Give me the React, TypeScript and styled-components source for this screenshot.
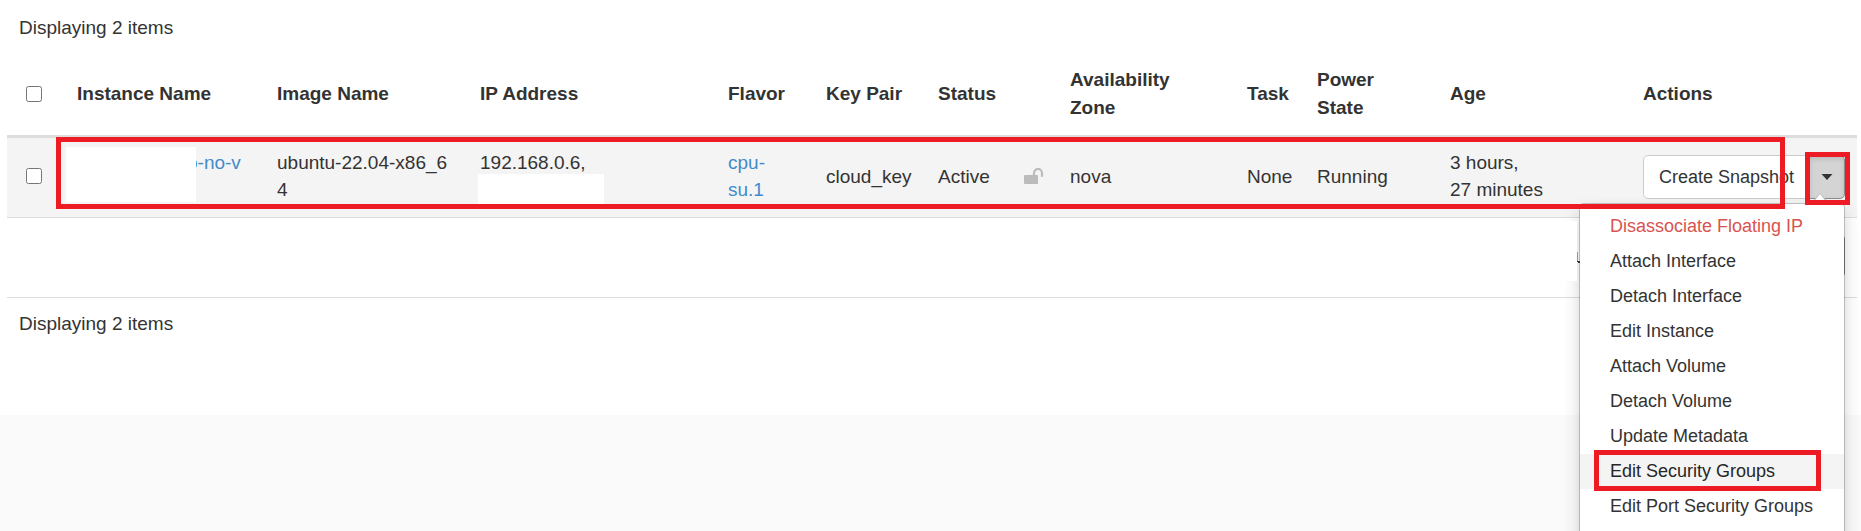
import React from "react";
import styled, { createGlobalStyle, css } from "styled-components";

const GlobalStyle = createGlobalStyle`
  *, *::before, *::after { box-sizing: border-box; }
  body {
    margin: 0;
    background: #fafafa;
    color: #333;
    font: 19px/27px "Liberation Sans", Arial, sans-serif;
  }
`;

const Page = styled.main`
  height: 100vh;
  overflow: hidden;
`;

const Panel = styled.section`
  padding: 0 4px 78px 7px;
  background: #fff;
`;

const Count = styled.p<{ $compact?: boolean }>`
  margin: 0;
  padding: ${(p) => (p.$compact ? "12px 12px 0" : "14px 12px 13px")};
`;

const Table = styled.table`
  width: 100%;
  table-layout: fixed;
  border-collapse: separate;
  border-spacing: 0;
`;

const Col = styled.col<{ $share: number }>`
  width: ${(p) => (p.$share / 1850) * 100}%;
`;

const Th = styled.th`
  height: 84px;
  padding: 0 11px 2px;
  border-bottom: 3px solid #ddd;
  line-height: 28px;
  text-align: left;
  vertical-align: middle;
`;

const Row = styled.tr<{ $striped?: boolean }>`
  position: relative;
  background: ${(p) => (p.$striped ? "#f4f4f4" : "#fff")};
`;

const Td = styled.td`
  position: relative;
  height: 80px;
  padding: 0 11px 3px;
  border-bottom: 1px solid #ddd;
  vertical-align: middle;
`;

const PlainTd = styled(Td)`
  position: static;
`;

const ImageTd = styled(Td)`
  padding-right: 20px;
  word-break: break-all;
`;

const ActionsTd = styled(Td)`
  padding-bottom: 1px;
`;

const Check = styled.input`
  display: block;
  width: 16px;
  height: 16px;
  margin: 0 0 0 8px;
`;

const Link = styled.a`
  color: #428bca;
  text-decoration: none;
`;

const TwoLines = styled.div`
  height: 54px;
`;

const NameLines = styled(TwoLines)`
  padding-left: 110px;
`;

const Redaction = styled.span<{ $kind: "name" | "address" | "row" }>`
  position: absolute;
  background: #fff;
  ${(p) =>
    p.$kind === "name" &&
    css`
      left: 0;
      top: 9px;
      width: 130px;
      height: 55px;
    `}
  ${(p) =>
    p.$kind === "address" &&
    css`
      left: 9px;
      top: 36px;
      width: 126px;
      height: 30px;
    `}
  ${(p) =>
    p.$kind === "row" &&
    css`
      right: 280px;
      top: 3px;
      width: 60px;
      height: 60px;
      z-index: 3;
    `}
`;

const Fragment = styled.svg`
  position: absolute;
  right: 277px;
  top: 34px;
  z-index: 3;
`;

const ButtonGroup = styled.div`
  position: relative;
  display: flex;
  width: 202px;
`;

const Button = styled.button`
  flex: 1;
  height: 44px;
  padding: 0 15px;
  border: 1px solid #ccc;
  border-radius: 5px 0 0 5px;
  background: #fff;
  color: #333;
  font: 18px/26px "Liberation Sans", Arial, sans-serif;
  white-space: nowrap;
`;

const Toggle = styled.button`
  display: flex;
  align-items: center;
  justify-content: center;
  width: 38px;
  height: 44px;
  margin-left: -1px;
  padding: 0;
  border: 1px solid #8c8c8c;
  border-radius: 0 5px 5px 0;
  background: #d4d4d4;
  box-shadow: inset 0 3px 5px rgba(0, 0, 0, 0.125);
`;

const LoneToggle = styled(Toggle)`
  margin-left: 164px;
`;

const Menu = styled.ul`
  position: absolute;
  z-index: 2;
  top: 48px;
  right: 0;
  width: 266px;
  margin: 0;
  padding: 5px 0 24px;
  list-style: none;
  background: #fff;
  background-clip: padding-box;
  border: 1px solid rgba(0, 0, 0, 0.2);
  border-radius: 5px;
  box-shadow: 0 8px 16px rgba(0, 0, 0, 0.175);

  &::before {
    content: "";
    position: absolute;
    top: -11px;
    right: 15px;
    border: 9px solid transparent;
    border-top: 0;
    border-bottom: 10px solid #bbb;
  }

  &::after {
    content: "";
    position: absolute;
    top: -10px;
    right: 16px;
    border: 8px solid transparent;
    border-top: 0;
    border-bottom: 10px solid #fff;
  }
`;

const MenuLink = styled.a<{ $danger?: boolean; $active?: boolean }>`
  display: block;
  padding: 0 30px;
  background: ${(p) => (p.$active ? "#f4f4f4" : "transparent")};
  color: ${(p) => (p.$danger ? "#d9534f" : p.$active ? "#262626" : "#333")};
  font-size: 18px;
  line-height: 35px;
  text-decoration: none;
  white-space: nowrap;
`;

const MenuItem = styled.li`
  position: relative;
`;

const Highlight = styled.span<{ $target: "row" | "toggle" | "item" }>`
  position: absolute;
  z-index: 4;
  border: 5px solid #ed1c24;
  pointer-events: none;
  ${(p) =>
    p.$target === "row" &&
    css`
      top: -1px;
      left: 49px;
      right: 72px;
      height: 72px;
    `}
  ${(p) =>
    p.$target === "toggle" &&
    css`
      top: -3px;
      right: -5px;
      width: 45px;
      height: 53px;
    `}
  ${(p) =>
    p.$target === "item" &&
    css`
      top: -4px;
      left: 14px;
      right: 23px;
      height: 41px;
    `}
`;

const shares = [59, 200, 203, 248, 98, 112, 86, 46, 177, 70, 133, 193, 225];

const menuItems = [
  "Disassociate Floating IP",
  "Attach Interface",
  "Detach Interface",
  "Edit Instance",
  "Attach Volume",
  "Detach Volume",
  "Update Metadata",
  "Edit Security Groups",
  "Edit Port Security Groups",
];

const LockSvg = styled.svg`
  display: block;
`;

const UnlockIcon = () => (
  <LockSvg width="20" height="17" viewBox="0 0 20 17" role="img" aria-label="Unlocked">
    <rect x="0" y="7" width="14" height="9" rx="1" fill="#bbb" />
    <path d="M10 7.500V5a4 4 0 0 1 8 0v3" fill="none" stroke="#bbb" strokeWidth="2.200" strokeLinecap="round" />
  </LockSvg>
);

const Caret = () => (
  <svg width="12" height="6" viewBox="0 0 12 6" aria-hidden="true">
    <path d="M0.500 0h11L6 6z" fill="#333" />
  </svg>
);

export default function App() {
  return (
    <Page>
      <GlobalStyle />
      <Panel>
        <Count>Displaying 2 items</Count>
        <Table>
          <colgroup>
            {shares.map((share, i) => (
              <Col key={i} $share={share} />
            ))}
          </colgroup>
          <thead>
            <tr>
              <Th><Check type="checkbox" aria-label="Select all instances" /></Th>
              <Th>Instance Name</Th>
              <Th>Image Name</Th>
              <Th>IP Address</Th>
              <Th>Flavor</Th>
              <Th>Key Pair</Th>
              <Th>Status</Th>
              <Th />
              <Th>Availability<br />Zone</Th>
              <Th>Task</Th>
              <Th>Power<br />State</Th>
              <Th>Age</Th>
              <Th>Actions</Th>
            </tr>
          </thead>
          <tbody>
            <Row $striped>
              <PlainTd>
                <Check type="checkbox" aria-label="Select instance" />
                <Highlight $target="row" />
              </PlainTd>
              <Td>
                <NameLines><Link href="#instance">o-no-v</Link></NameLines>
                <Redaction $kind="name" />
              </Td>
              <ImageTd>ubuntu-22.04-x86_64</ImageTd>
              <Td>
                <TwoLines>192.168.0.6,</TwoLines>
                <Redaction $kind="address" />
              </Td>
              <Td><Link href="#flavor">cpu-<br />su.1</Link></Td>
              <Td>cloud_key</Td>
              <Td>Active</Td>
              <Td><UnlockIcon /></Td>
              <Td>nova</Td>
              <Td>None</Td>
              <Td>Running</Td>
              <Td>3 hours,<br />27 minutes</Td>
              <ActionsTd>
                <ButtonGroup>
                  <Button type="button">Create Snapshot</Button>
                  <Toggle type="button" aria-label="More actions" aria-expanded="true">
                    <Caret />
                  </Toggle>
                  <Menu>
                    {menuItems.map((label, i) => (
                      <MenuItem key={label}>
                        <MenuLink href="#action" $danger={i === 0} $active={i === 7}>{label}</MenuLink>
                        {i === 7 && <Highlight $target="item" />}
                      </MenuItem>
                    ))}
                  </Menu>
                  <Highlight $target="toggle" />
                </ButtonGroup>
              </ActionsTd>
            </Row>
            <Row>
              <PlainTd colSpan={12}>
                <Redaction $kind="row" />
                <Fragment width="3" height="12" viewBox="0 0 3 12" aria-hidden="true">
                  <path d="M0 0h1v9H0z" fill="#5ba7e6" />
                  <path d="M0 9h3v2H1v-1H0z" fill="#333" />
                </Fragment>
              </PlainTd>
              <PlainTd>
                <LoneToggle type="button" aria-label="More actions" />
              </PlainTd>
            </Row>
          </tbody>
        </Table>
        <Count $compact>Displaying 2 items</Count>
      </Panel>
    </Page>
  );
}
